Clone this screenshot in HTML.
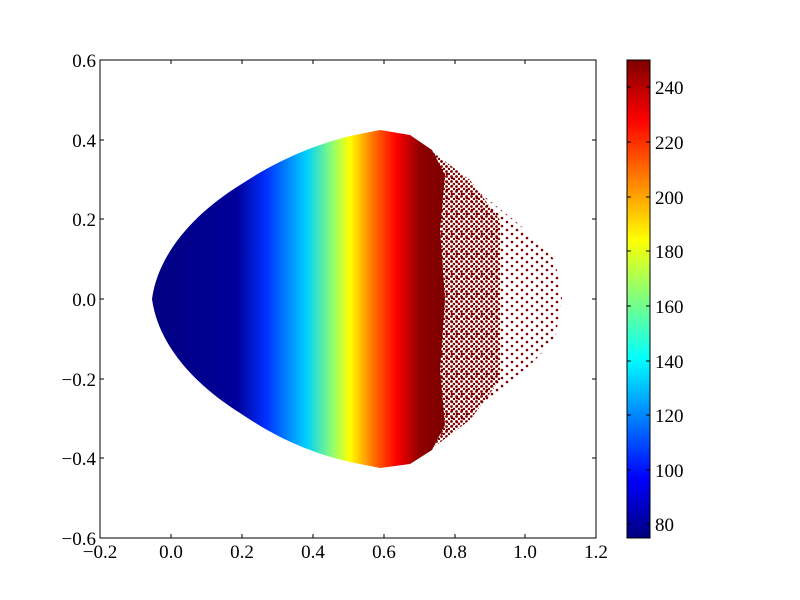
<!DOCTYPE html>
<html><head><meta charset="utf-8"><style>
html,body{margin:0;padding:0;background:#fff;}
svg{display:block}
text{font-family:"Liberation Serif",serif;font-size:19px;fill:#000}
</style></head><body>
<svg width="800" height="600" viewBox="0 0 800 600">
<defs>
<linearGradient id="g" gradientUnits="userSpaceOnUse" x1="150" y1="0" x2="440" y2="0">
<stop offset="0" stop-color="#00007f"/>
<stop offset="0.3" stop-color="#00009a"/>
<stop offset="0.4" stop-color="#0030ff"/>
<stop offset="0.54" stop-color="#00d0ff"/>
<stop offset="0.63" stop-color="#90ff70"/>
<stop offset="0.69" stop-color="#ffff00"/>
<stop offset="0.77" stop-color="#ff7000"/>
<stop offset="0.85" stop-color="#ff0000"/>
<stop offset="0.93" stop-color="#900000"/>
<stop offset="1" stop-color="#7f0000"/>
</linearGradient>
<linearGradient id="cb" x1="0" y1="1" x2="0" y2="0">
<stop offset="0" stop-color="#00007f"/>
<stop offset="0.125" stop-color="#0000ff"/>
<stop offset="0.375" stop-color="#00ffff"/>
<stop offset="0.625" stop-color="#ffff00"/>
<stop offset="0.875" stop-color="#ff0000"/>
<stop offset="1" stop-color="#7f0000"/>
</linearGradient>
<pattern id="dots" width="10" height="8" patternUnits="userSpaceOnUse">
<circle cx="2" cy="2" r="1.3" fill="#7f0000"/>
<circle cx="7" cy="6" r="1.3" fill="#7f0000"/>
</pattern>
<pattern id="dots2" width="5" height="5" patternUnits="userSpaceOnUse">
<circle cx="1.5" cy="1.5" r="1.4" fill="#7f0000"/>
<circle cx="4" cy="4" r="1.2" fill="#7f0000"/>
</pattern>
</defs>
<path d="M420,150 L470,185 L520,225 L555,260 L562,299 L555,340 L520,375 L470,415 L420,450 Z" fill="url(#dots)"/>
<path d="M430,150 L470,180 L500,220 L500,380 L470,420 L430,450 Z" fill="url(#dots2)"/>
<path d="M152,299 C158,255 192,215 240,185 C275,162 310,146 350,136 L380,130 L410,135 L432,150 L445,175 L440,230 L445,299 L440,370 L445,425 L432,450 L410,464 L380,468 L350,462 C310,453 275,437 240,413 C192,383 158,343 152,299 Z" fill="url(#g)"/>
<rect x="100" y="60" width="496" height="478" fill="none" stroke="#000" stroke-width="1"/>
<g stroke="#000" stroke-width="1">
<path d="M100,60v4M100,538v-4M171,60v4M171,538v-4M242,60v4M242,538v-4M313,60v4M313,538v-4M384,60v4M384,538v-4M455,60v4M455,538v-4M525,60v4M525,538v-4M596,60v4M596,538v-4"/>
<path d="M100,60h4M596,60h-4M100,140h4M596,140h-4M100,219h4M596,219h-4M100,299h4M596,299h-4M100,379h4M596,379h-4M100,458h4M596,458h-4M100,538h4M596,538h-4"/>
</g>
<g text-anchor="end">
<text x="96" y="67">0.6</text>
<text x="96" y="147">0.4</text>
<text x="96" y="226">0.2</text>
<text x="96" y="306">0.0</text>
<text x="96" y="386">−0.2</text>
<text x="96" y="465">−0.4</text>
<text x="96" y="545">−0.6</text>
</g>
<g text-anchor="middle">
<text x="100" y="558">−0.2</text>
<text x="171" y="558">0.0</text>
<text x="242" y="558">0.2</text>
<text x="313" y="558">0.4</text>
<text x="384" y="558">0.6</text>
<text x="455" y="558">0.8</text>
<text x="525" y="558">1.0</text>
<text x="596" y="558">1.2</text>
</g>
<rect x="627" y="60" width="23" height="478" fill="url(#cb)" stroke="#000" stroke-width="1"/>
<g stroke="#000"><path d="M627,524h4M650,524h-4M627,470h4M650,470h-4M627,415h4M650,415h-4M627,361h4M650,361h-4M627,306h4M650,306h-4M627,251h4M650,251h-4M627,197h4M650,197h-4M627,142h4M650,142h-4M627,87h4M650,87h-4"/></g>
<g>
<text x="655" y="531">80</text>
<text x="655" y="477">100</text>
<text x="655" y="422">120</text>
<text x="655" y="368">140</text>
<text x="655" y="313">160</text>
<text x="655" y="258">180</text>
<text x="655" y="204">200</text>
<text x="655" y="149">220</text>
<text x="655" y="94">240</text>
</g>
</svg>
</body></html>
